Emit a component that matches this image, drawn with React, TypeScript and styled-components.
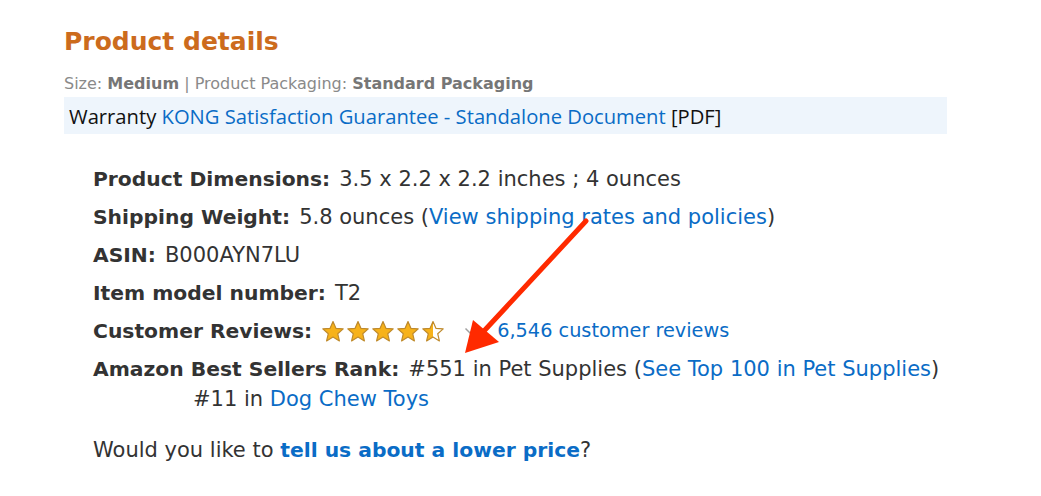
import React from "react";
import styled, { createGlobalStyle } from "styled-components";

const Global = createGlobalStyle`
  html, body { margin: 0; padding: 0; background: #ffffff; }
  body { font-family: "DejaVu Sans", Verdana, sans-serif; color: #333333; }
`;

const Page = styled.div`
  position: relative;
  width: 1041px;
  height: 496px;
  overflow: hidden;
  padding: 27px 0 0 64px;
  box-sizing: border-box;
`;

const Heading = styled.h2`
  margin: 0;
  font-family: "DejaVu Sans", Verdana, sans-serif;
  font-weight: 700;
  font-size: 25px;
  line-height: 30px;
  color: #cc6b1d;
`;

const SizeLine = styled.div`
  margin-top: 17px;
  font-size: 16px;
  line-height: 20px;
  color: #8a8a8a;
  white-space: nowrap;
  b { color: #767676; font-weight: 700; }
`;

const WarrantyBox = styled.div`
  margin-top: 3px;
  width: 883px;
  height: 37px;
  background: #eef5fc;
  display: flex;
  align-items: center;
  padding-left: 5px;
  box-sizing: border-box;
  font-family: "Open Sans", "Noto Sans", sans-serif;
  font-size: 20.2px;
  color: #111111;
  white-space: nowrap;
`;

const Link = styled.a<{ $bold?: boolean; $size?: string }>`
  color: #0a6cc6;
  text-decoration: none;
  font-weight: ${(p) => (p.$bold ? 700 : 400)};
  font-size: ${(p) => p.$size ?? "inherit"};
`;

const List = styled.ul`
  list-style: none;
  margin: 33px 0 0 29px;
  padding: 0;
  display: flex;
  flex-direction: column;
  gap: 14px;
`;

const Item = styled.li`
  font-size: 21px;
  line-height: 24px;
  height: 24px;
  color: #333333;
  display: flex;
  align-items: center;
  white-space: nowrap;
`;

const Label = styled.b`
  font-weight: 700;
  font-size: 20.3px;
  margin-right: 9px;
`;

const Stars = styled.span`
  display: inline-flex;
  gap: 1px;
  margin-right: 19px;
`;

const Chevron = styled.span`
  display: inline-flex;
  margin-right: 21px;
`;

const RankBlock = styled.li`
  font-size: 21px;
  line-height: 24px;
  color: #333333;
  white-space: nowrap;
`;

const SubRank = styled.div`
  margin: 6px 0 0 100px;
`;

const Footer = styled.p`
  margin: 27px 0 0 29px;
  font-size: 21px;
  line-height: 24px;
  color: #333333;
`;

const Arrow = styled.svg`
  position: absolute;
  left: 0;
  top: 0;
  pointer-events: none;
`;

const Star: React.FC<{ half?: boolean; id: string }> = ({ half, id }) => (
  <svg width="24" height="23" viewBox="0 0 24 23">
    <defs>
      <linearGradient id={id} x1="0" x2="1" y1="0" y2="0">
        <stop offset={half ? "0.5" : "1"} stopColor="#f7b21a" />
        <stop offset={half ? "0.5" : "1"} stopColor="#ffffff" />
      </linearGradient>
    </defs>
    <path
      d="M12 1.5 L14.9 8.3 L22.2 8.9 L16.7 13.7 L18.4 20.9 L12 17.1 L5.6 20.9 L7.3 13.7 L1.8 8.9 L9.1 8.3 Z"
      fill={`url(#${id})`}
      stroke="#bf8a2c"
      strokeWidth="1.2"
      strokeLinejoin="round"
    />
  </svg>
);

export default function App() {
  return (
    <>
      <Global />
      <Page>
        <Heading>Product details</Heading>
        <SizeLine>
          Size: <b>Medium</b> | Product Packaging: <b>Standard Packaging</b>
        </SizeLine>
        <WarrantyBox>
          Warranty&nbsp;<Link href="#">KONG Satisfaction Guarantee - Standalone Document</Link>&nbsp;[PDF]
        </WarrantyBox>
        <List>
          <Item>
            <Label>Product Dimensions:</Label>3.5 x 2.2 x 2.2 inches ; 4 ounces
          </Item>
          <Item>
            <Label>Shipping Weight:</Label>5.8 ounces (<Link href="#">View shipping rates and policies</Link>)
          </Item>
          <Item>
            <Label>ASIN:</Label>B000AYN7LU
          </Item>
          <Item>
            <Label>Item model number:</Label>T2
          </Item>
          <Item>
            <Label>Customer Reviews:</Label>
            <Stars>
              <Star id="s1" />
              <Star id="s2" />
              <Star id="s3" />
              <Star id="s4" />
              <Star id="s5" half />
            </Stars>
            <Chevron>
              <svg width="12" height="10" viewBox="0 0 12 10">
                <path d="M1.5 2.5 L6 7 L10.5 2.5" fill="none" stroke="#a0a0a0" strokeWidth="1.5" />
              </svg>
            </Chevron>
            <Link href="#" $size="19.3px">6,546 customer reviews</Link>
          </Item>
          <RankBlock>
            <Label>Amazon Best Sellers Rank:</Label>#551 in Pet Supplies (<Link href="#">See Top 100 in Pet Supplies</Link>)
            <SubRank>
              #11 in <Link href="#">Dog Chew Toys</Link>
            </SubRank>
          </RankBlock>
        </List>
        <Footer>
          Would you like to <Link href="#" $bold $size="20.3px">tell us about a lower price</Link>?
        </Footer>
        <Arrow width="1041" height="496" viewBox="0 0 1041 496">
          <line x1="586" y1="221" x2="484" y2="331" stroke="#ff2a00" strokeWidth="5" strokeLinecap="round" />
          <polygon points="465,353 473,320 499,342" fill="#ff2a00" />
        </Arrow>
      </Page>
    </>
  );
}
